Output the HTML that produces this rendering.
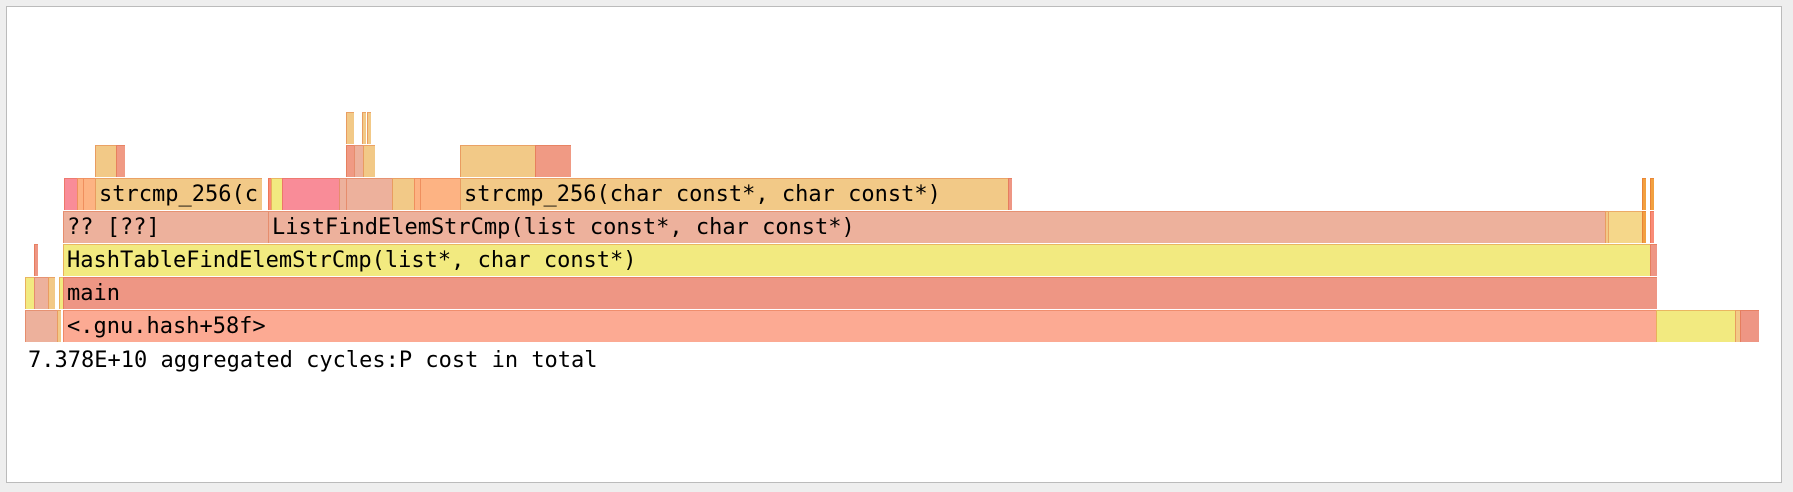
<!DOCTYPE html>
<html><head><style>
body{margin:0;width:1793px;height:492px;background:#eee;position:relative;overflow:hidden}
#f{position:absolute;left:6px;top:6px;width:1774px;height:475px;background:#fff;border:1px solid #bbb}
.b{position:absolute;box-sizing:border-box;height:32px;border-top:1px solid rgba(220,90,40,.35);border-left:1px solid rgba(220,90,40,.4);font:22px "DejaVu Sans Mono","Liberation Mono",monospace;line-height:31px;padding-left:3px;white-space:nowrap;overflow:hidden;color:#000}
.t{position:absolute;left:28px;top:346px;font:22px "DejaVu Sans Mono","Liberation Mono",monospace;line-height:30px}
</style></head><body>
<div id="f"></div>
<div class="b" style="left:25px;top:310px;width:32px;background:#edb19c"></div>
<div class="b" style="left:57px;top:310px;width:4px;background:#f2c987"></div>
<div class="b" style="left:63px;top:310px;width:1593px;background:#fcaa93">&lt;.gnu.hash+58f&gt;</div>
<div class="b" style="left:1656px;top:310px;width:79px;background:#f2ea80"></div>
<div class="b" style="left:1735px;top:310px;width:5px;background:#f2c987"></div>
<div class="b" style="left:1740px;top:310px;width:19px;background:#ee9684"></div>
<div class="b" style="left:25px;top:277px;width:9px;background:#f2ea80"></div>
<div class="b" style="left:34px;top:277px;width:14px;background:#edb19c"></div>
<div class="b" style="left:48px;top:277px;width:7px;background:#f2c987"></div>
<div class="b" style="left:59px;top:277px;width:2px;background:#f2ea80"></div>
<div class="b" style="left:63px;top:277px;width:1594px;background:#ee9684">main</div>
<div class="b" style="left:34px;top:244px;width:2px;background:#ee9684"></div>
<div class="b" style="left:63px;top:244px;width:1587px;background:#f2ea80">HashTableFindElemStrCmp(list*, char const*)</div>
<div class="b" style="left:1650px;top:244px;width:7px;background:#ee9684"></div>
<div class="b" style="left:63px;top:211px;width:205px;background:#edb19c">?? [??]</div>
<div class="b" style="left:268px;top:211px;width:1337px;background:#edb19c">ListFindElemStrCmp(list const*, char const*)</div>
<div class="b" style="left:1605px;top:211px;width:3px;background:#f2c987"></div>
<div class="b" style="left:1608px;top:211px;width:34px;background:#f5d78a"></div>
<div class="b" style="left:1642px;top:211px;width:4px;background:#f2a040"></div>
<div class="b" style="left:1650px;top:211px;width:4px;background:#f98c78"></div>
<div class="b" style="left:64px;top:178px;width:13px;background:#f98c98"></div>
<div class="b" style="left:77px;top:178px;width:6px;background:#fdb383"></div>
<div class="b" style="left:83px;top:178px;width:12px;background:#fdb383"></div>
<div class="b" style="left:95px;top:178px;width:167px;background:#f2c987">strcmp_256(c</div>
<div class="b" style="left:268px;top:178px;width:3px;background:#f98c78"></div>
<div class="b" style="left:271px;top:178px;width:11px;background:#f2ea80"></div>
<div class="b" style="left:282px;top:178px;width:57px;background:#f98c98"></div>
<div class="b" style="left:339px;top:178px;width:7px;background:#edb19c"></div>
<div class="b" style="left:346px;top:178px;width:46px;background:#edb19c"></div>
<div class="b" style="left:392px;top:178px;width:22px;background:#f2c987"></div>
<div class="b" style="left:414px;top:178px;width:6px;background:#fdb383"></div>
<div class="b" style="left:420px;top:178px;width:40px;background:#fdb383"></div>
<div class="b" style="left:460px;top:178px;width:548px;background:#f2c987">strcmp_256(char const*, char const*)</div>
<div class="b" style="left:1008px;top:178px;width:3px;background:#ee9684"></div>
<div class="b" style="left:1642px;top:178px;width:2px;background:#f2a040"></div>
<div class="b" style="left:1650px;top:178px;width:2px;background:#f2a040"></div>
<div class="b" style="left:95px;top:145px;width:21px;background:#f2c987"></div>
<div class="b" style="left:116px;top:145px;width:9px;background:#f09a84"></div>
<div class="b" style="left:346px;top:145px;width:8px;background:#f09a84"></div>
<div class="b" style="left:354px;top:145px;width:9px;background:#edb19c"></div>
<div class="b" style="left:363px;top:145px;width:12px;background:#f2c987"></div>
<div class="b" style="left:460px;top:145px;width:75px;background:#f2c987"></div>
<div class="b" style="left:535px;top:145px;width:36px;background:#f09a84"></div>
<div class="b" style="left:346px;top:112px;width:8px;background:#f2c987"></div>
<div class="b" style="left:362px;top:112px;width:4px;background:#f2c987"></div>
<div class="b" style="left:367px;top:112px;width:3px;background:#f2c987"></div>
<div class="t">7.378E+10 aggregated cycles:P cost in total</div>
</body></html>
